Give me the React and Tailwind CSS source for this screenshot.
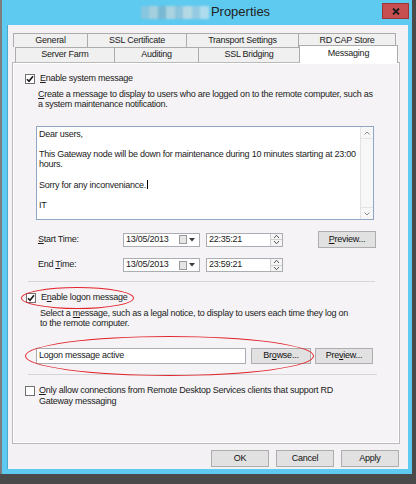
import React from 'react';

const FONT = { fontFamily: '"Liberation Sans", Arial, sans-serif' };

function CheckBox({ checked }) {
  return (
    <div className="w-[10px] h-[10px] border border-[#707070] bg-white flex items-center justify-center shrink-0">
      {checked && (
        <svg width="8" height="8" viewBox="0 0 8 8">
          <path d="M1 4.2 L3 6.3 L7 1.2" fill="none" stroke="#1a1a1a" strokeWidth="1.6" />
        </svg>
      )}
    </div>
  );
}

function Btn({ children, className = '' }) {
  return (
    <div className={`flex items-center justify-center bg-[#e1e1e1] border border-[#adadad] text-[#111] ${className}`}>
      {children}
    </div>
  );
}

function DateBox({ value }) {
  return (
    <div className="w-[77px] h-[14px] bg-white border border-[#abadb3] flex items-center pl-[2px]">
      <span className="flex-1">{value}</span>
      <div className="w-[8px] h-[9px] bg-[#e6e6e6] border border-[#9a9a9a] mr-[2px]" />
      <svg width="6" height="4" viewBox="0 0 6 4" className="mr-[4px]">
        <path d="M0 0 H6 L3 3.5 Z" fill="#3a3a3a" />
      </svg>
    </div>
  );
}

function TimeBox({ value }) {
  return (
    <div className="w-[77px] h-[14px] bg-white border border-[#abadb3] flex items-center pl-[2px]">
      <span className="flex-1">{value}</span>
      <div className="w-[12px] h-full border-l border-[#d0d0d0] flex flex-col bg-[#f4f4f4]">
        <div className="flex-1 flex items-center justify-center border-b border-[#d0d0d0]">
          <svg width="5" height="3" viewBox="0 0 5 3"><path d="M0 3 L2.5 0.3 L5 3" fill="none" stroke="#444" strokeWidth="0.9" /></svg>
        </div>
        <div className="flex-1 flex items-center justify-center">
          <svg width="5" height="3" viewBox="0 0 5 3"><path d="M0 0 L2.5 2.7 L5 0" fill="none" stroke="#444" strokeWidth="0.9" /></svg>
        </div>
      </div>
    </div>
  );
}

export default function App() {
  const row1 = [
    ['General', 'w-[75px]'],
    ['SSL Certificate', 'w-[100px]'],
    ['Transport Settings', 'w-[113px]'],
    ['RD CAP Store', 'w-[98px]'],
  ];
  const row2 = [
    ['Server Farm', 'w-[100px]'],
    ['Auditing', 'w-[85px]'],
    ['SSL Bridging', 'w-[102px]'],
  ];
  const blur = ['#86c6de', '#a3cfdf', '#78b8d2', '#a9d3e0', '#8cc4dc', '#b5d9e4', '#94cbe2', '#aedcee'];

  return (
    <div className="w-[416px] h-[484px] bg-[#4a4a4a] overflow-hidden text-[9px] tracking-[-0.25px] text-[#1b1b1b]" style={FONT}>
      <div className="w-[412px] h-[474px] bg-[#5ecaef] border-l-2 border-[#7d7d7d] flex flex-col pl-[5px] pr-[4px] pb-[5px]">
        {/* title bar */}
        <div className="h-[25px] relative flex items-center justify-center pr-[4px]">
          <div className="flex items-center h-[13px] mr-[2px] blur-[1px]">
            {blur.map((c, i) => (
              <div key={i} className="w-[8.5px] h-full" style={{ background: c }} />
            ))}
          </div>
          <span className="text-[13px] tracking-normal text-[#222] pb-[1px]">Properties</span>
          <div className="absolute right-[-1px] top-[3px] w-[27px] h-[16px] bg-[#c74f4f] border border-[#9a3535] flex items-center justify-center">
            <svg width="8" height="7" viewBox="0 0 8 7">
              <path d="M1 0.5 L7 6.5 M7 0.5 L1 6.5" stroke="#1a1a1a" strokeWidth="1.8" />
            </svg>
          </div>
        </div>

        {/* client area */}
        <div className="flex-1 bg-[#f4f1f4] border-l border-[#4aa9cf] flex flex-col pt-[8px]">
          {/* tabs */}
          <div className="flex h-[14px] ml-[5px]">
            {row1.map(([t, w]) => (
              <div key={t} className={`${w} h-full bg-[#f0f0f0] border border-b-0 border-[#acacac] -ml-px first:ml-0 flex items-center justify-center`}>
                {t}
              </div>
            ))}
          </div>
          <div className="flex h-[15px] ml-[7px] items-end">
            {row2.map(([t, w]) => (
              <div key={t} className={`${w} h-full bg-[#f0f0f0] border border-b-0 border-[#acacac] -ml-px first:ml-0 flex items-center justify-center`}>
                {t}
              </div>
            ))}
            <div className="w-[99px] h-[18px] -ml-px mb-[-1px] relative z-10 bg-white border border-b-0 border-[#acacac] flex items-center justify-center pb-[2px]">
              Messaging
            </div>
          </div>

          {/* panel */}
          <div className="relative ml-[4px] w-[388px] h-[382px] border border-[#b9b9b9] bg-[#f5f3f5] shadow-[inset_1px_1px_0_#fff,inset_-1px_-1px_0_#fff]">
            <div className="flex items-center h-[12px] mt-[10px] pl-[12px] gap-[5px]">
              <CheckBox checked />
              <span><u>E</u>nable system message</span>
            </div>
            <div className="ml-[25px] mt-[4px] leading-[10px] whitespace-nowrap">
              <div><u>C</u>reate a message to display to users who are logged on to the remote computer, such as</div>
              <div>a system maintenance notification.</div>
            </div>

            {/* message box */}
            <div className="ml-[23px] mt-[17px] w-[338px] h-[94px] border border-[#8ea5c4] bg-white flex">
              <div className="flex-1 pl-[2px] pt-[2px] leading-[10.15px] whitespace-nowrap">
                <div>Dear users,</div>
                <div>&nbsp;</div>
                <div>This Gateway node will be down for maintenance during 10 minutes starting at 23:00</div>
                <div>hours.</div>
                <div>&nbsp;</div>
                <div className="flex items-center">Sorry for any inconveniance.<span className="inline-block w-px h-[9px] bg-black ml-px" /></div>
                <div>&nbsp;</div>
                <div>IT</div>
              </div>
              <div className="w-[13px] h-full bg-[#f7f7f7] border-l border-[#e3e3e3] flex flex-col justify-between">
                <div className="h-[12px] flex items-center justify-center border-b border-[#e3e3e3]">
                  <svg width="6" height="4" viewBox="0 0 6 4"><path d="M0.5 3.5 L3 1 L5.5 3.5" fill="none" stroke="#8a8a8a" strokeWidth="1" /></svg>
                </div>
                <div className="h-[12px] flex items-center justify-center border-t border-[#e3e3e3]">
                  <svg width="6" height="4" viewBox="0 0 6 4"><path d="M0.5 0.5 L3 3 L5.5 0.5" fill="none" stroke="#8a8a8a" strokeWidth="1" /></svg>
                </div>
              </div>
            </div>

            {/* start time */}
            <div className="flex items-center h-[17px] mt-[11px] ml-[25px]">
              <span className="w-[85px]"><u>S</u>tart Time:</span>
              <DateBox value="13/05/2013" />
              <div className="w-[6px]" />
              <TimeBox value="22:35:21" />
              <Btn className="ml-[35px] w-[58px] h-[17px]"><span><u>P</u>review...</span></Btn>
            </div>
            {/* end time */}
            <div className="flex items-center h-[14px] mt-[10px] ml-[25px]">
              <span className="w-[85px]">End <u>T</u>ime:</span>
              <DateBox value="13/05/2013" />
              <div className="w-[6px]" />
              <TimeBox value="23:59:21" />
            </div>

            <div className="ml-[15px] mt-[9px] w-[347px] h-px bg-[#d5d5d5]" />

            <div className="flex items-center h-[12px] mt-[10px] pl-[13px] gap-[5px]">
              <CheckBox checked />
              <span>E<u>n</u>able logon message</span>
            </div>
            <div className="ml-[27px] mt-[4px] leading-[10px] whitespace-nowrap">
              <div>Select a <u>m</u>essage, such as a legal notice, to display to users each time they log on</div>
              <div>to the remote computer.</div>
            </div>

            <div className="flex items-center h-[16px] mt-[20px] ml-[23px]">
              <div className="w-[210px] h-full bg-white border border-[#abadb3] flex items-center pl-[2px]">Logon message active</div>
              <Btn className="ml-[5px] w-[60px] h-full"><span>Br<u>o</u>wse...</span></Btn>
              <Btn className="ml-[4px] w-[58px] h-full"><span>Pre<u>v</u>iew...</span></Btn>
            </div>

            <div className="ml-[15px] mt-[10px] w-[349px] h-px bg-[#d5d5d5]" />

            <div className="flex items-start mt-[10px] pl-[12px] gap-[4px]">
              <div className="mt-[1px]"><CheckBox /></div>
              <div className="leading-[11px]">
                <div><u>O</u>nly allow connections from Remote Desktop Services clients that support RD</div>
                <div>Gateway messaging</div>
              </div>
            </div>

            {/* annotations */}
            <div className="absolute left-[8px] top-[224px] w-[113px] h-[22px] rounded-[50%] border-[1.5px] border-[#e2232b]" />
            <div className="absolute left-[12px] top-[273px] w-[289px] h-[40px] rounded-[50%] border-[1.5px] border-[#e2232b]" />
          </div>

          {/* dialog buttons */}
          <div className="flex justify-end gap-[7px] mt-[6px] pr-[9px]">
            <Btn className="w-[58px] h-[17px] border-[#3c7fb1]">OK</Btn>
            <Btn className="w-[58px] h-[17px]">Cancel</Btn>
            <Btn className="w-[58px] h-[17px]">Apply</Btn>
          </div>
        </div>
      </div>
    </div>
  );
}
